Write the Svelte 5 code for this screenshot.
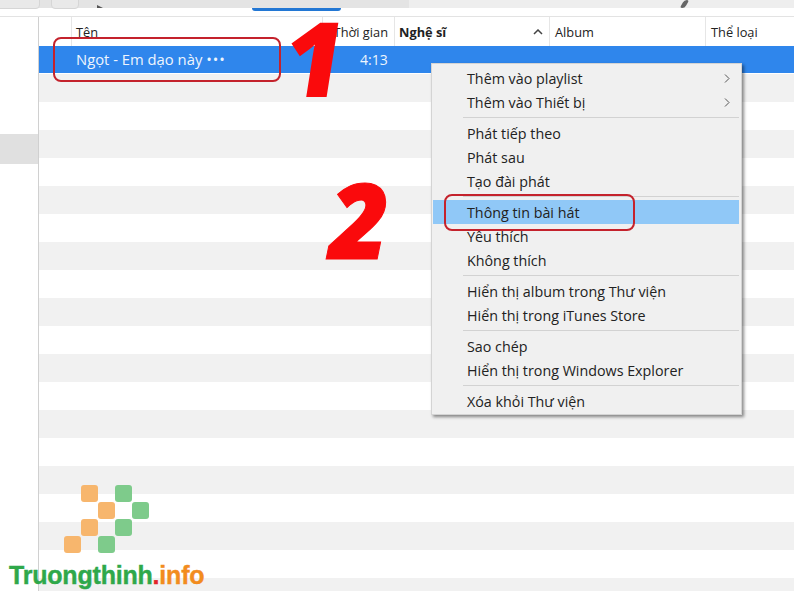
<script lang="ts">
  const columns = [
    { label: 'Tên', width: 251, cls: 'name' },
    { label: 'Thời gian', width: 72, cls: 'time' },
    { label: 'Nghệ sĩ', width: 155, cls: 'artist' },
    { label: 'Album', width: 156, cls: 'album' },
    { label: 'Thể loại', width: 89, cls: 'genre' }
  ];

  const menu = [
    [{ label: 'Thêm vào playlist', sub: true }, { label: 'Thêm vào Thiết bị', sub: true }],
    [{ label: 'Phát tiếp theo' }, { label: 'Phát sau' }, { label: 'Tạo đài phát' }],
    [{ label: 'Thông tin bài hát', active: true }, { label: 'Yêu thích' }, { label: 'Không thích' }],
    [{ label: 'Hiển thị album trong Thư viện' }, { label: 'Hiển thị trong iTunes Store' }],
    [{ label: 'Sao chép' }, { label: 'Hiển thị trong Windows Explorer' }],
    [{ label: 'Xóa khỏi Thư viện' }]
  ];

  const stripes = Array.from({ length: 19 });

  // logo squares, [column, row] on a half-step grid
  const orange = [[2, 0], [3, 1], [2, 2], [1, 3]];
  const green = [[4, 0], [5, 1], [4, 2], [3, 3]];
</script>

<div class="window">
  <div class="toolbar">
    <div class="controls">
      <span class="btn first"></span>
      <span class="btn second"></span>
      <span class="play"></span>
      <span class="pill"></span>
      <span class="note"></span>
    </div>
  </div>

  <div class="body">
    <aside class="sidebar">
      <div class="side-item"></div>
    </aside>

    <main class="list">
      <div class="head">
        {#each columns as col}
          <div class="col {col.cls}" style="width: {col.width}px">
            <span>{col.label}</span>
            {#if col.cls === 'artist'}
              <svg class="sort" width="10" height="6" viewBox="0 0 10 6" fill="none" stroke="#444" stroke-width="1.5">
                <path d="M1 5l4-4 4 4" />
              </svg>
            {/if}
          </div>
        {/each}
      </div>

      <div class="row selected">
        <span class="song">Ngọt - Em dạo này <span class="dots">•••</span></span>
        <span class="dur">4:13</span>
      </div>

      {#each stripes as _, i}
        <div class="row" class:grey={i % 2 === 0}></div>
      {/each}
    </main>
  </div>

  <div class="menu">
    {#each menu as group, g}
      {#if g > 0}<div class="sep"></div>{/if}
      {#each group as item}
        <div class="item" class:active={item.active}>
          <span>{item.label}</span>
          {#if item.sub}
            <svg width="6" height="9" viewBox="0 0 6 9" fill="none" stroke="#555" stroke-width="1">
              <path d="M1 .5l4 4-4 4" />
            </svg>
          {/if}
        </div>
      {/each}
    {/each}
  </div>

  <div class="mark mark-song"></div>
  <div class="mark mark-info"></div>
  <div class="num one">1</div>
  <div class="num two">2</div>

  <div class="logo">
    {#each orange as [c, r]}
      <span class="sq orange" style="left: {c * 17 - 17}px; top: {r * 17}px"></span>
    {/each}
    {#each green as [c, r]}
      <span class="sq green" style="left: {c * 17 - 17}px; top: {r * 17}px"></span>
    {/each}
  </div>
  <div class="brand">Truongthinh<span class="dot">.</span><span class="info">info</span></div>
</div>

<style>
  :global(body) {
    margin: 0;
    background: #fff;
  }
  .window {
    position: relative;
    width: 794px;
    height: 591px;
    overflow: hidden;
    font-family: "Open Sans", "Noto Sans", sans-serif;
    font-size: 14.3px;
    color: #222;
  }
  .toolbar {
    height: 16px;
    border-bottom: 1px solid #e3e3e3;
    background: #fff;
  }
  .controls {
    position: relative;
    height: 8px;
    background: linear-gradient(to right, #e4e4e4 409px, #eeeeee 409px);
  }
  .btn {
    position: absolute;
    top: -6px;
    height: 13px;
    background: #e9e9e9;
    border: 1px solid #d6d6d6;
    border-radius: 4px;
  }
  .btn.first { left: -4px; width: 42px; }
  .btn.second { left: 51px; width: 26px; }
  .play {
    position: absolute;
    left: 97px;
    top: 5px;
    border-left: 6px solid #555;
    border-top: 3px solid transparent;
    border-bottom: 0;
  }
  .pill {
    position: absolute;
    left: 252px;
    top: 8px;
    width: 89px;
    height: 3px;
    background: #2277d4;
    border-radius: 0 0 5px 5px;
  }
  .note {
    position: absolute;
    left: 682px;
    top: 0;
    width: 5px;
    height: 8px;
    background: #666;
    border-radius: 3px;
    transform: skewX(-30deg);
  }
  .body {
    display: flex;
  }
  .sidebar {
    width: 38px;
    flex-shrink: 0;
    border-right: 1px solid #d0d0d0;
    height: 574px;
    padding-top: 117px;
    box-sizing: content-box;
  }
  .side-item {
    height: 30px;
    background: #e0e0e0;
  }
  .list {
    flex: 1;
    min-width: 0;
  }
  .head {
    display: flex;
    height: 29px;
    padding-left: 32px;
    background: #fff;
    font-size: 12.8px;
  }
  .col {
    display: flex;
    align-items: center;
    justify-content: space-between;
    flex-shrink: 0;
    box-sizing: border-box;
    padding: 0 6px 0 4px;
    border-left: 1px solid #e6e6e6;
    white-space: nowrap;
  }
  .col.album,
  .col.genre {
    padding-left: 5px;
  }
  .col.time {
    justify-content: flex-end;
  }
  .col.artist {
    font-weight: 700;
  }
  .row {
    height: 28px;
  }
  .row.grey {
    background: #f1f1f1;
  }
  .row.selected {
    display: flex;
    align-items: center;
    box-sizing: border-box;
    height: 27px;
    margin-bottom: 1px;
    padding: 0 0 1px 37px;
    background: #2f86ec;
    color: #eef5fd;
    font-size: 14.8px;
  }
  .song {
    width: 284px;
  }
  .dots {
    letter-spacing: 1px;
  }
  .dur {
    font-size: 14px;
  }
  .menu {
    position: absolute;
    left: 431px;
    top: 63px;
    width: 311px;
    height: 352px;
    box-sizing: border-box;
    padding: 2px 2px 2px 1px;
    background: #f0f0f0;
    border: 1px solid #d4d4d4;
    box-shadow: 2px 2px 3px rgba(0, 0, 0, 0.45);
  }
  .item {
    display: flex;
    align-items: center;
    justify-content: space-between;
    box-sizing: border-box;
    height: 24px;
    padding: 0 9px 0 34px;
  }
  .item.active {
    background: #90c8f7;
  }
  .sep {
    height: 1px;
    margin: 3px 0 3px 30px;
    background: #d2d2d2;
  }
  .mark {
    position: absolute;
    box-sizing: border-box;
    border: 2px solid #c4222c;
    border-radius: 8px;
  }
  .mark-song {
    left: 53px;
    top: 37px;
    width: 228px;
    height: 45px;
  }
  .mark-info {
    left: 444px;
    top: 194px;
    width: 191px;
    height: 37px;
  }
  .num {
    position: absolute;
    font-family: "Open Sans", sans-serif;
    font-weight: 800;
    font-style: italic;
    font-size: 104px;
    line-height: 104px;
    color: #fa0a0c;
    -webkit-text-stroke: 1px #fa0a0c;
  }
  .one {
    left: 285px;
    top: 5px;
    font-style: normal;
    transform: skewX(-9deg);
    -webkit-text-stroke: 0;
  }
  .two {
    left: 329px;
    top: 167px;
  }
  .logo {
    position: absolute;
    left: 64px;
    top: 485px;
  }
  .sq {
    position: absolute;
    width: 16.5px;
    height: 16.5px;
    border-radius: 3px;
  }
  .orange { background: #f7b66d; }
  .green { background: #7ecb8b; }
  .brand {
    position: absolute;
    left: 9px;
    top: 560px;
    font-family: "Liberation Sans", sans-serif;
    font-weight: 700;
    font-size: 25px;
    line-height: 30px;
    letter-spacing: -0.2px;
    color: #2fa84a;
    -webkit-text-stroke: 0.4px currentColor;
  }
  .dot { color: #e2232b; }
  .info { color: #f28c1e; }
</style>
